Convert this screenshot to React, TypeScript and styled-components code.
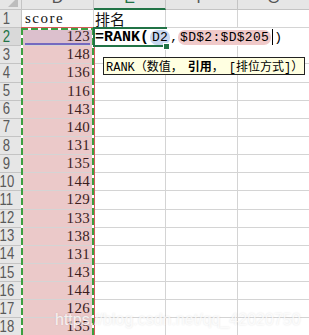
import React from "react";
import styled, { createGlobalStyle, css } from "styled-components";

const Global = createGlobalStyle`
  html, body { margin: 0; padding: 0; background: #fff; overflow: hidden; }
  #root { width: 309px; height: 335px; }
`;

const GREEN = "#217346";
const GRID = "#d4d4d4";
const HEAD_BG = "#e6e6e6";
const HEAD_LINE = "#c4c4c4";

const Sheet = styled.div`
  position: relative;
  width: 309px;
  height: 335px;
  overflow: hidden;
  display: grid;
  grid-template-columns: 22px 72px 72px 72px 72px;
  grid-template-rows: 10px repeat(18, 18.15px);
  font-family: "Liberation Serif", "Noto Sans CJK SC", serif;
`;

const Corner = styled.div`
  position: relative;
  background: ${HEAD_BG};
  border-right: 1px solid ${HEAD_LINE};
  border-bottom: 1px solid ${HEAD_LINE};
  box-sizing: border-box;
  overflow: hidden;
  &::after {
    content: "";
    position: absolute;
    right: 3px;
    bottom: 2px;
    width: 0;
    height: 0;
    border-left: 10px solid transparent;
    border-bottom: 10px solid #bdbdbd;
  }
`;

const ColHead = styled.div<{ $active?: boolean }>`
  box-sizing: border-box;
  background: ${HEAD_BG};
  border-right: 1px solid ${HEAD_LINE};
  border-bottom: ${(p) => (p.$active ? `2px solid ${GREEN}` : `1px solid ${HEAD_LINE}`)};
  overflow: hidden;
  display: flex;
  justify-content: center;
  align-items: flex-start;
  font-family: "Liberation Sans", Arial, sans-serif;
  font-size: 16px;
  line-height: 16px;
  color: ${(p) => (p.$active ? GREEN : "#555")};
  span { margin-top: -10px; }
`;

const RowHead = styled.div<{ $active?: boolean }>`
  box-sizing: border-box;
  background: ${(p) => (p.$active ? "#d9d9d9" : HEAD_BG)};
  border-right: 1px solid ${HEAD_LINE};
  border-bottom: 1px solid ${HEAD_LINE};
  display: flex;
  align-items: center;
  justify-content: center;
  padding-right: 8px;
  font-family: "Liberation Sans", Arial, sans-serif;
  font-size: 16px;
  color: ${(p) => (p.$active ? GREEN : "#5a5a5a")};
  span {
    display: inline-block;
    transform: scaleX(0.82);
    white-space: nowrap;
  }
`;

const Cell = styled.div<{ $fill?: string; $align?: "left" | "right" }>`
  box-sizing: border-box;
  position: relative;
  background: ${(p) => p.$fill ?? "#fff"};
  border-right: 1px solid ${GRID};
  border-bottom: 1px solid ${GRID};
  display: flex;
  align-items: center;
  justify-content: ${(p) => (p.$align === "right" ? "flex-end" : "flex-start")};
  padding: ${(p) => (p.$align === "right" ? "0 3px 0 0" : "0 0 0 2px")};
  font-size: 15px;
  color: #111;
  white-space: nowrap;
`;

const LabelCell = styled(Cell)`
  letter-spacing: 1.5px;
  padding-left: 3px;
`;

const ScoreCell = styled(Cell)<{ $ref?: boolean }>`
  color: #3c1e1e;
  letter-spacing: 0.3px;
  ${(p) =>
    p.$ref &&
    css`
      &::after {
        content: "";
        position: absolute;
        left: 3px;
        right: 3px;
        bottom: 0;
        height: 2px;
        background: #7469c0;
      }
    `}
`;

const NameCell = styled(Cell)`
  font-size: 15px;
  font-family: "Noto Sans CJK SC", sans-serif;
  padding-left: 1px;
`;

const EditCell = styled.div`
  grid-column: span 3;
  position: relative;
  background: #fff;
  display: flex;
  align-items: center;
  font-family: "Liberation Mono", "Noto Sans CJK SC", monospace;
  font-size: 13px;
  color: #000;
  white-space: nowrap;
  z-index: 2;
  &::before {
    content: "";
    position: absolute;
    left: -1px;
    top: -1px;
    width: 72px;
    bottom: -1px;
    border: 2px solid ${GREEN};
    border-right: none;
    pointer-events: none;
  }
  &::after {
    content: "";
    position: absolute;
    left: 69px;
    bottom: -4px;
    width: 5px;
    height: 5px;
    background: ${GREEN};
    border: 1px solid #fff;
  }
`;

const FnName = styled.span`
  font-weight: bold;
  font-size: 15px;
  padding-left: 1px;
  margin-right: 1px;
`;

const RefPill = styled.span<{ $color: string }>`
  background: ${(p) => p.$color};
  border-radius: 7px;
  padding: 0 2px;
  height: 15px;
  line-height: 15px;
  display: inline-flex;
  align-items: center;
  letter-spacing: 0.3px;
`;

const Sep = styled.span``;

const Caret = styled.span`
  display: inline-block;
  width: 1px;
  height: 16px;
  background: #000;
  margin: 0 1px;
`;

const Marquee = styled.div`
  position: absolute;
  left: 21px;
  top: 28px;
  width: 73px;
  bottom: 0;
  pointer-events: none;
  z-index: 1;
  background:
    repeating-linear-gradient(to bottom, #3c9f40 0 7px, #fff 7px 10px) left top / 2px 100% no-repeat,
    repeating-linear-gradient(to bottom, #3c9f40 0 7px, #fff 7px 10px) right top / 2px 100% no-repeat,
    repeating-linear-gradient(to right, #3c9f40 0 7px, #fff 7px 10px) left top / 100% 2px no-repeat;
`;

const RefBorder = styled.div`
  position: absolute;
  left: 21px;
  top: 27px;
  width: 74px;
  bottom: 0;
  border-top: 1px solid #d65c5c;
  border-right: 1px solid #d65c5c;
  box-sizing: border-box;
  pointer-events: none;
  z-index: 1;
`;

const Tooltip = styled.div`
  position: absolute;
  left: 103px;
  top: 57px;
  width: 202px;
  height: 18px;
  box-sizing: border-box;
  background: #ffffe1;
  border: 1px solid #222;
  display: flex;
  align-items: center;
  padding-left: 2px;
  font-family: "Liberation Mono", "Noto Sans CJK SC", monospace;
  font-size: 12px;
  color: #000;
  white-space: pre;
  overflow: hidden;
  z-index: 3;
  b { font-weight: bold; }
`;

const TipGap = styled.span`
  display: inline-block;
  width: 5px;
`;

const Watermark = styled.div`
  position: absolute;
  left: 55px;
  top: 311px;
  font-family: "Liberation Sans", Arial, sans-serif;
  font-size: 16px;
  color: rgba(255, 255, 255, 0.8);
  text-shadow: 0 0 2px rgba(0, 0, 0, 0.12);
  white-space: nowrap;
  z-index: 4;
  pointer-events: none;
`;

const scores = [123, 148, 136, 116, 143, 140, 131, 135, 144, 129, 133, 138, 131, 143, 144, 126, 135];

export default function App() {
  return (
    <>
      <Global />
      <Sheet>
        <Corner />
        <ColHead><span>D</span></ColHead>
        <ColHead $active><span>E</span></ColHead>
        <ColHead><span>F</span></ColHead>
        <ColHead><span>G</span></ColHead>

        <RowHead><span>1</span></RowHead>
        <LabelCell>score</LabelCell>
        <NameCell>排名</NameCell>
        <Cell />
        <Cell />

        <RowHead $active><span>2</span></RowHead>
        <ScoreCell $fill="#dcc0cd" $align="right" $ref>{scores[0]}</ScoreCell>
        <EditCell>
          <FnName>=RANK(</FnName>
          <RefPill $color="#c9d7f0">D2</RefPill>
          <Sep>, </Sep>
          <RefPill $color="#f0c9c9">$D$2:$D$205</RefPill>
          <Caret />
          <Sep>)</Sep>
        </EditCell>

        {scores.slice(1).map((s, i) => (
          <React.Fragment key={i}>
            <RowHead><span>{i + 3}</span></RowHead>
            <ScoreCell $fill="#ebc9c9" $align="right">{s}</ScoreCell>
            <Cell />
            <Cell />
            <Cell />
          </React.Fragment>
        ))}

        <RefBorder />
        <Marquee />
        <Tooltip>
          RANK（数值，<TipGap /><b>引用</b>，<TipGap />[排位方式]）
        </Tooltip>
        <Watermark>https://blog.csdn.net/qq_42020750</Watermark>
      </Sheet>
    </>
  );
}
